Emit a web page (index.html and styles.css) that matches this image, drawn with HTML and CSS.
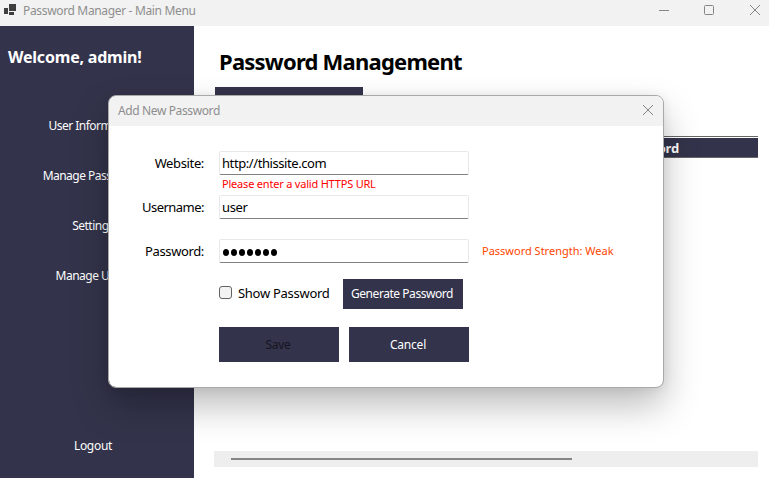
FILE: index.html
```html
<!DOCTYPE html>
<html lang="en">
<head>
<meta charset="utf-8">
<title>Password Manager</title>
<link rel="stylesheet" href="styles.css">
</head>
<body>
<div class="window">
  <header class="titlebar">
    <svg class="app-icon" width="12" height="12" viewBox="0 0 12 12"><path d="M5 0h7v7H5zM0 4h4v6H0zM5 8h5v3H5z" fill="#3f3f3f"/></svg>
    <span class="titlebar-text">Password Manager - Main Menu</span>
    <svg class="win-controls" width="104" height="12" viewBox="0 0 104 12" fill="none" stroke="#868686"><path d="M0 6.500h10"/><rect x="45.500" y="1.500" width="9" height="9" rx="1"/><path d="M91 1l10 10M101 1l-10 10"/></svg>
  </header>
  <div class="body">
    <nav class="sidebar">
      <h2 class="welcome">Welcome, admin!</h2>
      <a class="nav-item">User Information</a>
      <a class="nav-item">Manage Passwords</a>
      <a class="nav-item">Settings</a>
      <a class="nav-item">Manage Users</a>
      <a class="nav-item nav-logout">Logout</a>
    </nav>
    <main class="content">
      <h1 class="heading">Password Management</h1>
      <div class="add-button"></div>
      <div class="table">
        <div class="table-head">Password</div>
      </div>
      <div class="scrollbar"><div class="thumb"></div></div>
    </main>
  </div>
  <section class="dialog">
    <header class="dialog-bar">
      <span class="dialog-title">Add New Password</span>
      <svg width="12" height="12" viewBox="0 0 12 12" fill="none" stroke="#868686"><path d="M1 1l10 10M11 1L1 11"/></svg>
    </header>
    <form class="form">
      <div class="row">
        <label class="label">Website:</label>
        <div class="field value-site">http://thissite.com</div>
      </div>
      <div class="error">Please enter a valid HTTPS URL</div>
      <div class="row row-user">
        <label class="label label-user">Username:</label>
        <div class="field">user</div>
      </div>
      <div class="row">
        <label class="label">Password:</label>
        <div class="field"><span class="dots"><i></i><i></i><i></i><i></i><i></i><i></i><i></i></span></div>
        <span class="strength">Password Strength: Weak</span>
      </div>
      <div class="options">
        <span class="checkbox"></span>
        <span class="show">Show Password</span>
        <div class="button generate">Generate Password</div>
      </div>
      <div class="actions">
        <div class="button save">Save</div>
        <div class="button cancel">Cancel</div>
      </div>
    </form>
  </section>
</div>
</body>
</html>
```
FILE: styles.css
```css
* { box-sizing: border-box; }
body { margin: 0; font-family: "Noto Sans", "Open Sans", sans-serif; font-size: 12px; color: #000; }
.window { position: relative; width: 769px; height: 478px; overflow: hidden; background: #fff; display: flex; flex-direction: column; white-space: nowrap; }
.titlebar { height: 26px; flex: none; background: #f2f2f2; display: flex; padding-left: 4px; }
.app-icon { margin-top: 4px; }
.titlebar-text { margin-left: 7px; line-height: 22px; color: #8e8e8e; letter-spacing: -0.34px; }
.win-controls { margin: 4px 6px 0 auto; }
.body { flex: 1; display: flex; }
.sidebar { width: 194px; background: #33334b; color: #fff; display: flex; flex-direction: column; }
.welcome { margin: 0 0 0 8px; height: 75px; padding-top: 19px; font-size: 16px; line-height: 24px; font-weight: 700; letter-spacing: -0.2px; }
.nav-item { height: 50px; line-height: 50px; width: 186px; text-align: center; letter-spacing: -0.52px; }
.nav-logout { margin: auto 0 7px; letter-spacing: -0.3px; }
.content { flex: 1; display: flex; flex-direction: column; padding: 0 11px 11px 20px; }
.heading { margin: 0 0 0 5px; height: 61px; padding-top: 19px; font-size: 22px; line-height: 32px; font-weight: 700; letter-spacing: -0.77px; }
.add-button { width: 148px; height: 34px; margin-left: 1px; background: #33334b; }
.table { margin-top: 15px; border-top: 1px solid #666; padding-top: 1px; }
.table-head { height: 20px; background: #33334b; border-bottom: 1px solid #666; color: #fff; font-size: 13px; font-weight: 700; line-height: 21px; padding-right: 79px; text-align: right; letter-spacing: -0.2px; }
.scrollbar { height: 16px; margin-top: auto; background: #eee; padding: 7px 0 0 17px; }
.thumb { width: 341px; height: 2px; background: #858585; }
.dialog { position: absolute; left: 108px; top: 95px; width: 556px; height: 293px; border: 1px solid #a9a9a9; border-radius: 8px; background: #fff; background-clip: padding-box; overflow: hidden; box-shadow: 0 18px 36px rgba(0,0,0,.26), 0 1px 12px rgba(0,0,0,.08); }
.dialog-bar { height: 30px; background: #f2f2f2; color: #8e8e8e; display: flex; justify-content: space-between; padding: 8px 9px 0; }
.dialog-title { line-height: 14px; letter-spacing: -0.38px; }
.form { padding-top: 25px; }
.row { display: flex; height: 24px; font-size: 13px; }
.row-user { margin-bottom: 20px; }
.label { width: 95px; margin-right: 15px; text-align: right; line-height: 24px; letter-spacing: -0.36px; }
.label-user { letter-spacing: -0.52px; }
.field { width: 250px; height: 24px; border: 1px solid #e8e8e8; border-bottom-color: #808080; border-radius: 2px; padding-left: 2px; line-height: 22px; letter-spacing: -0.35px; }
.value-site { letter-spacing: -0.42px; }
.error { height: 20px; padding-left: 113px; color: #f00; font-size: 11px; line-height: 17px; letter-spacing: -0.2px; }
.dots { display: flex; gap: 2px; padding: 9px 0 0 1px; }
.dots i { width: 6px; height: 7px; border-radius: 50%; background: #000; }
.strength { margin-left: 13px; color: #ff4500; font-size: 11px; line-height: 24px; }
.options { display: flex; margin: 16px 0 0 110px; height: 30px; }
.checkbox { width: 13px; height: 13px; margin-top: 7px; border: 1px solid #626262; border-radius: 3px; background: #f3f3f3; }
.show { width: 105px; margin-left: 6px; line-height: 29px; font-size: 13px; letter-spacing: -0.28px; }
.button { width: 120px; background: #33334b; color: #fff; text-align: center; }
.generate { line-height: 30px; letter-spacing: -0.45px; padding-right: 2px; }
.actions { display: flex; gap: 10px; margin: 18px 0 0 110px; line-height: 35px; }
.save { color: #151520; letter-spacing: -0.3px; padding-right: 2px; }
.cancel { letter-spacing: -0.2px; padding-right: 2px; }
```
